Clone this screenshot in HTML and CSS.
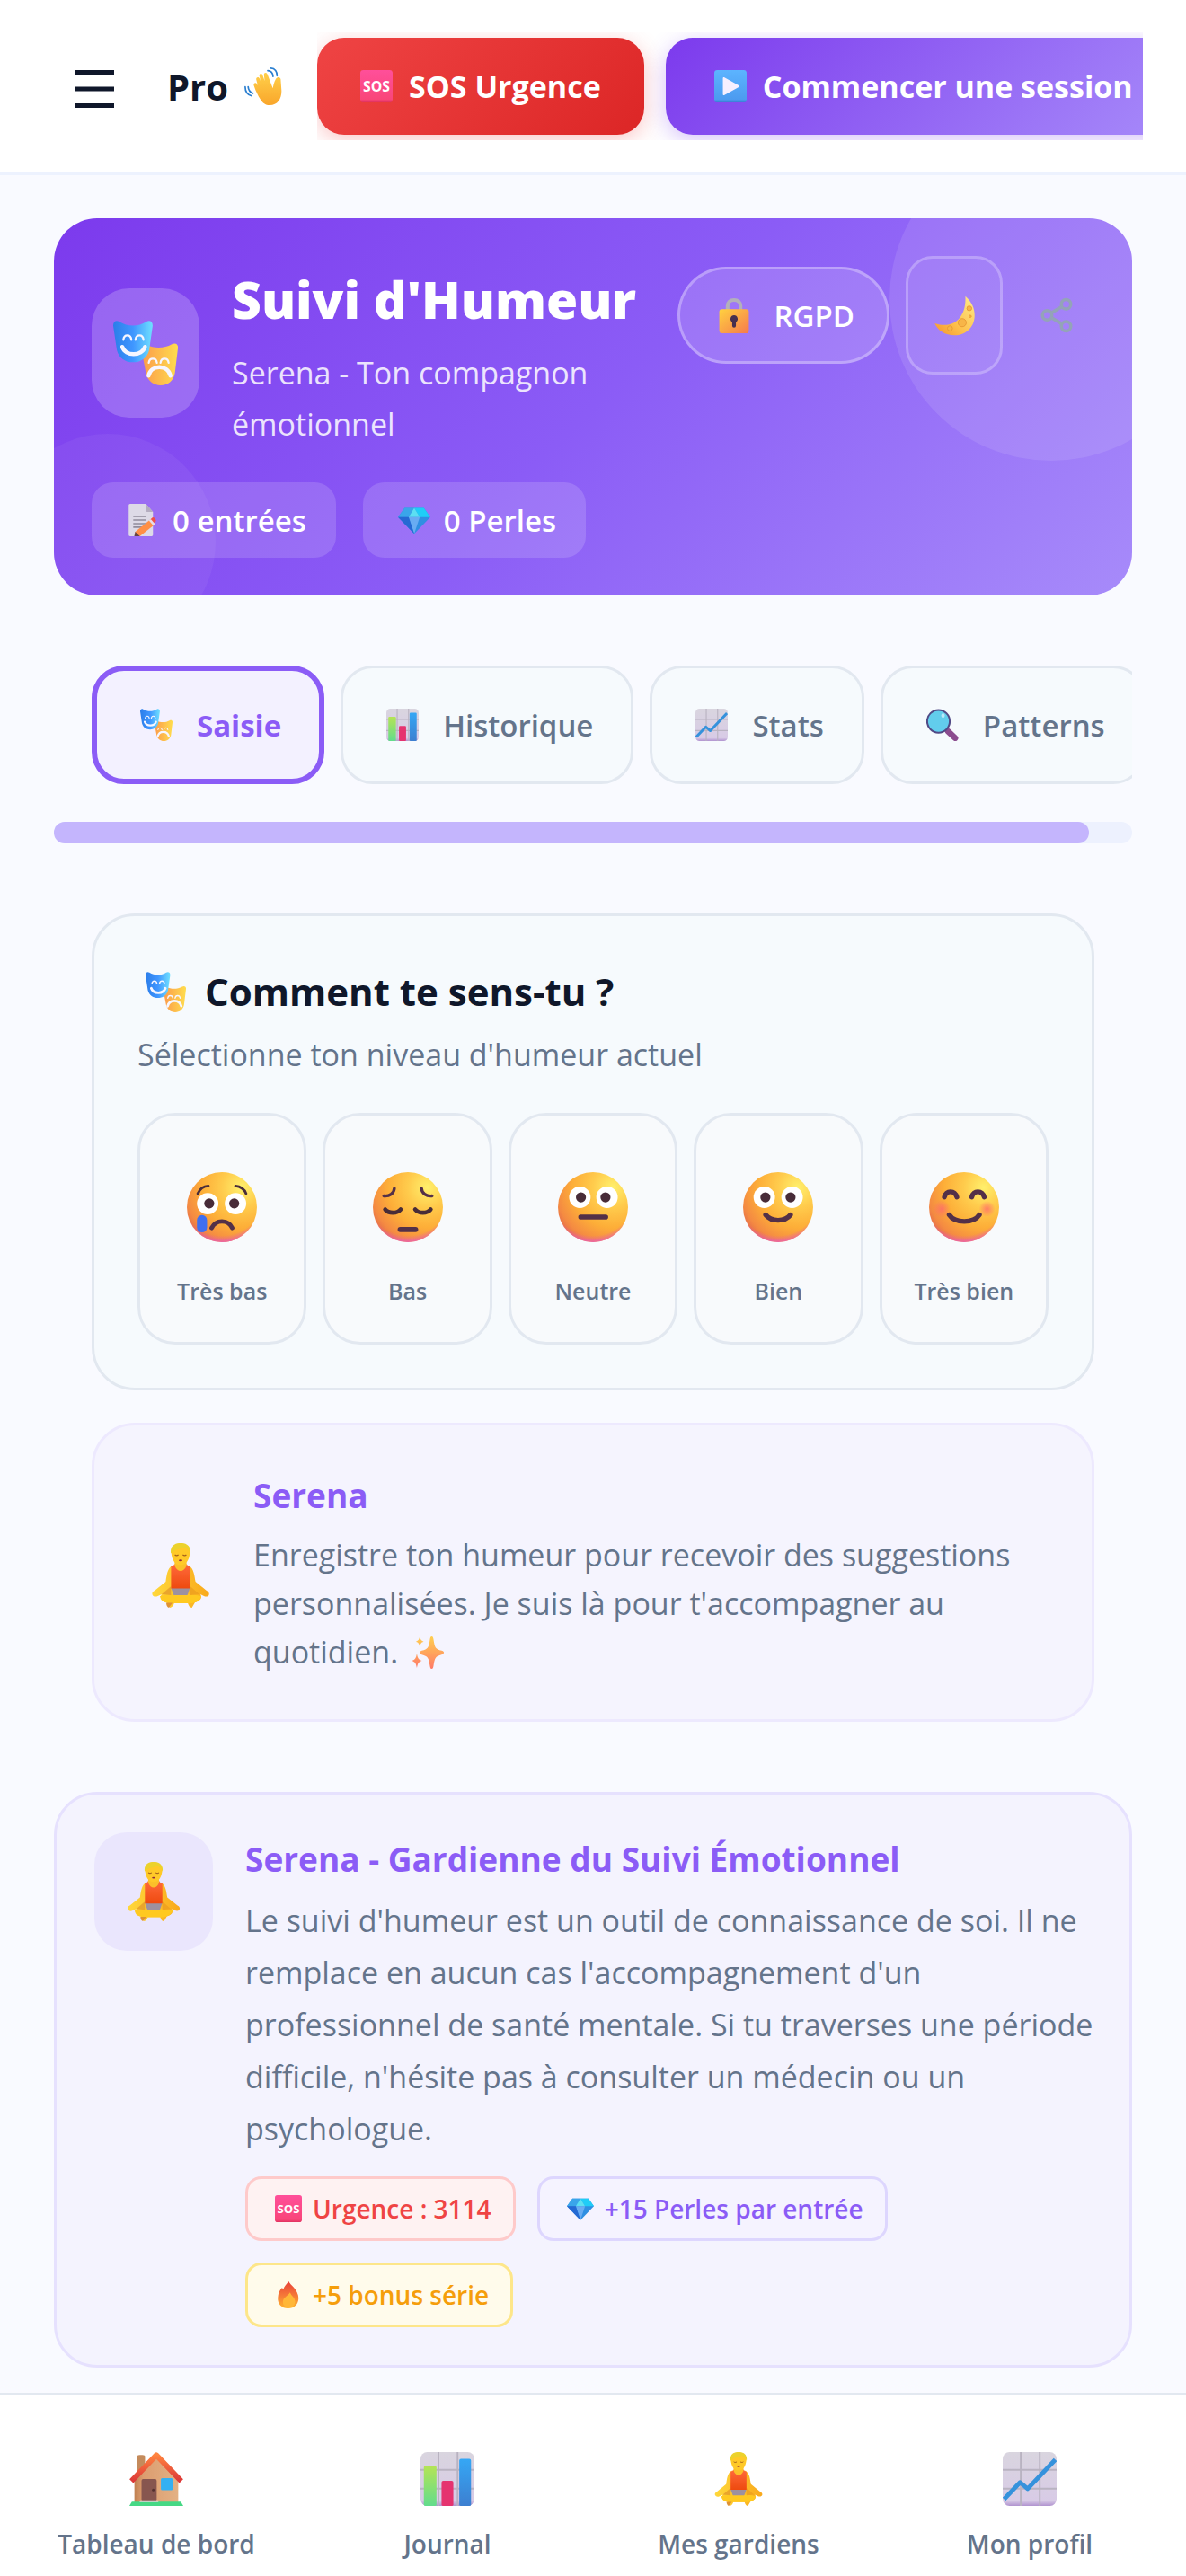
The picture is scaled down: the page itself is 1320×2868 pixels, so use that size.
FILE: index.html
```html
<!DOCTYPE html>
<html lang="fr">

<head>
    <meta charset="utf-8">
    <meta name="viewport" content="width=device-width, initial-scale=1">
    <title>Suivi d'Humeur</title>
    <link rel="stylesheet" href="styles.css">
</head>

<body>
    <!-- icons -->
    <svg class="sprite" width="0" height="0" aria-hidden="true">
        <defs>
            <linearGradient id="gBlue" x1="0" x2="1"><stop offset="0" stop-color="#2b7de9"/><stop offset=".5" stop-color="#3f96ff"/><stop offset="1" stop-color="#6fe0ff"/></linearGradient>
            <linearGradient id="gOrange" x1="0" x2="1"><stop offset="0" stop-color="#fb9a4b"/><stop offset="1" stop-color="#ffdd4d"/></linearGradient>
            <radialGradient id="gFace" cx=".78" cy=".22" r=".95"><stop offset="0" stop-color="#fff06c"/><stop offset=".3" stop-color="#ffcb4c"/><stop offset=".6" stop-color="#fdae38"/><stop offset=".85" stop-color="#f48a42"/><stop offset="1" stop-color="#e0644c"/></radialGradient>
            <radialGradient id="gChin" cx=".5" cy=".3" r=".72"><stop offset=".84" stop-color="#e85ca8" stop-opacity="0"/><stop offset="1" stop-color="#ea5cc0"/></radialGradient>
            <radialGradient id="gCheek"><stop offset="0" stop-color="#ff6b6b" stop-opacity=".8"/><stop offset="1" stop-color="#ff6b6b" stop-opacity="0"/></radialGradient>
            <linearGradient id="gHand" x1="0" y1="0" x2="0" y2="1"><stop offset="0" stop-color="#ffd04a"/><stop offset="1" stop-color="#f9a62b"/></linearGradient>
            <linearGradient id="gPanel" x1="0" y1="0" x2="0" y2="1"><stop offset="0" stop-color="#d9d5df"/><stop offset=".9" stop-color="#d8cbe6"/><stop offset="1" stop-color="#b093cf"/></linearGradient>
            <linearGradient id="gGreen" x1="0" y1="0" x2="0" y2="1"><stop offset="0" stop-color="#b5e455"/><stop offset="1" stop-color="#62dc8c"/></linearGradient>
            <linearGradient id="gBar" x1="0" y1="0" x2="0" y2="1"><stop offset="0" stop-color="#35a7f5"/><stop offset="1" stop-color="#3d7fd0"/></linearGradient>
            <linearGradient id="gTop" x1="0" y1="0" x2="0" y2="1"><stop offset="0" stop-color="#ff6a3c"/><stop offset="1" stop-color="#ee4a0f"/></linearGradient>
            <linearGradient id="gSkin" x1="0" x2="1"><stop offset="0" stop-color="#ffd83b"/><stop offset="1" stop-color="#f9a91c"/></linearGradient>
            <linearGradient id="gPlay" x1="0" y1="0" x2="0" y2="1"><stop offset="0" stop-color="#5cb4ff"/><stop offset=".9" stop-color="#4c9bf0"/><stop offset="1" stop-color="#3b7fd6"/></linearGradient>
            <linearGradient id="gSos" x1="0" y1="0" x2="0" y2="1"><stop offset="0" stop-color="#ff4f9a"/><stop offset=".9" stop-color="#f9467a"/><stop offset="1" stop-color="#e0325f"/></linearGradient>
            <linearGradient id="gFlame" x1="0" y1="0" x2="0" y2="1"><stop offset="0" stop-color="#e84038"/><stop offset=".5" stop-color="#f57638"/><stop offset="1" stop-color="#ffb52e"/></linearGradient>
            <linearGradient id="gWall" x1="0" x2="1"><stop offset="0" stop-color="#c08050"/><stop offset=".2" stop-color="#dc9d70"/><stop offset="1" stop-color="#e3b184"/></linearGradient>
            <linearGradient id="gRoof" x1="0" y1="0" x2="0" y2="1"><stop offset="0" stop-color="#ff8440"/><stop offset="1" stop-color="#dc3838"/></linearGradient>
            <linearGradient id="gSpark" x1="0" y1="0" x2="0" y2="1"><stop offset="0" stop-color="#ffcf50"/><stop offset="1" stop-color="#ff7a68"/></linearGradient>
            <linearGradient id="gMoon" x1="1" y1="0" x2="0" y2="1"><stop offset="0" stop-color="#ffec8c"/><stop offset=".6" stop-color="#fdc04c"/><stop offset="1" stop-color="#f5922e"/></linearGradient>
            <linearGradient id="gLock" x1="0" y1="0" x2="1" y2="1"><stop offset="0" stop-color="#ffd23f"/><stop offset="1" stop-color="#f67a4c"/></linearGradient>
        </defs>

        <symbol id="masks" viewBox="0 0 32 32">
            <path fill="url(#gOrange)" d="M14 14.500c0-2 1-3.800 2.600-2.600 3.400 2 8.600 2 12.400-.2 1.700-1 3.300-.1 3 2L30.500 26c-.7 3.800-3.500 6-7 6s-6.500-2.200-7.300-6z"/>
            <path fill="url(#gBlue)" d="M0 2.600C-.1.500 1.500-.5 3.100.6c3.900 2.500 9.500 2.500 13.200 0 1.700-1.100 3.300-.1 3.200 2l-1.700 11.900c-1 4.100-4.400 6.100-8 6.100s-7-2-8-6.100z"/>
            <g class="cut" fill="none" stroke-linecap="round">
                <path d="M5 9.500c.4-2.900 3.600-2.900 4 0M11 9.500c.4-2.900 3.600-2.900 4 0M17.600 20.800c.4-2.600 3.600-2.600 4 0M23.400 20.800c.4-2.600 3.600-2.600 4 0"/>
                <path d="M4.500 13c1.600 4.800 9.600 4.800 11.200 0M17.500 27.200c1.200-5.600 9.400-5.600 10.800 0" stroke-width="2"/>
            </g>
        </symbol>

        <symbol id="wave" viewBox="0 0 32 32">
            <path fill="url(#gHand)" d="M9.500 19.500 8 15.300c-.6-1.900 1.800-2.900 2.700-1.200l.7 1.300-1.300-5c-.5-2 1.900-2.800 2.700-1l.9 2-1-4.100c-.5-2 2-2.700 2.700-.8l1.800 5-.6-5.300c-.1-2 2.300-2.400 2.900-.4l4.600 11.900c.5-2 .8-5 2.600-8 1.500-2.300 4-1.500 4.100.4L31.500 20c0 7-3.500 12-10 12-4.500 0-7-3-9.500-7.500z"/>
            <path fill="none" stroke="#2b7fd0" stroke-width="1.300" stroke-linecap="round" d="M.7 16.500c0 3.500 2 6.700 5.500 7.700M3.200 16.500c.2 2.500 1.700 4.600 4 5.500M22.500.7c3.500 0 5.300 3 5.200 6.400M19.800 2.800c3 .2 4.300 2.100 4.500 4.900"/>
        </symbol>

        <symbol id="play" viewBox="0 0 32 32">
            <rect width="32" height="32" rx="3" fill="url(#gPlay)"/>
            <path d="M8.500 8.200c0-1 .8-1.400 1.600-.9l14 7.800c.8.500.8 1.300 0 1.800l-14 7.800c-.8.500-1.600.1-1.600-.9z" fill="#f6efff"/>
        </symbol>

        <symbol id="lock" viewBox="0 0 32 38">
            <path d="M9 15V8.500C9 4.600 12 2 16 2s7 2.600 7 6.500V15" fill="none" stroke="#b3b0bb" stroke-width="4"/>
            <rect y="12" width="32" height="26" rx="3" fill="url(#gLock)"/>
            <path d="M16 18.500a4 4 0 0 1 2 7.400V30a2 2 0 0 1-4 0v-4.100a4 4 0 0 1 2-7.400z" fill="#46304f"/>
        </symbol>

        <symbol id="moon" viewBox="0 0 32 32">
            <path d="M24.500.5C29.600 5 32 10.500 31.800 16.500 31.300 25.500 24.500 31.500 16 31.500 8.500 31.500 2.500 27.500.2 22c9.300 3.200 16.300.5 20.300-5C23.700 12.500 24.800 7 24.500.5z" fill="url(#gMoon)"/>
            <g fill="#f7b548" stroke="#e79a35" stroke-width=".7"><circle cx="22" cy="21.500" r="3.200"/><circle cx="12.300" cy="26" r="2"/><circle cx="27.600" cy="10.200" r="1.900"/><circle cx="28.300" cy="16.500" r=".9"/></g>
        </symbol>

        <symbol id="memo" viewBox="0 0 32 32">
            <path d="M2 1.500C2 .7 2.500 0 3.400 0H19l7 8v22.500c0 .9-.6 1.500-1.400 1.500H3.400C2.600 32 2 31.400 2 30.500z" fill="#dcd8e6"/>
            <path d="M19 0l7 8h-5.400C19.600 8 19 7.300 19 6.400z" fill="#b0a9bd"/>
            <path d="M6.500 12.500h13M6.500 16h13M6.500 19.500h13M6.500 23h9" stroke="#8b8597" stroke-width="1.400"/>
            <path d="M8.500 27.500 23.800 15l4.400 5L13 32H8z" fill="#ff8a3c"/>
            <path d="M23 15.700l2.500-2.100c1.300-1 4.300 2.400 3.200 3.700l-2.500 2.100z" fill="#ef4740"/>
            <path d="M22 16.500l1.800-1.500 4.400 5-1.800 1.500z" fill="#e6dbe6"/>
            <path d="M7.500 32l1-4.500L13 32z" fill="#5a3a3c"/>
        </symbol>

        <symbol id="gem" viewBox="0 0 32 32">
            <path d="M6.500 4h19L32 13 16 29.500 0 13z" fill="#2f8fe2"/>
            <path d="M6.500 4H16l-5.500 9H0z" fill="#3aa5ea"/><path d="M16 4h9.500L32 13H21.500z" fill="#1fcdf7"/>
            <path d="M16 4l-5.500 9h11z" fill="#5ce0f2"/><path d="M10.500 13h11L16 29.500z" fill="#69acf2"/><path d="M0 13h10.500L16 29.500z" fill="#2569d3"/>
        </symbol>

        <symbol id="bars" viewBox="0 0 32 32">
            <rect width="32" height="32" rx="4" fill="url(#gPanel)"/>
            <path d="M10.700 0v32M22 0v32M0 10.500h32M0 21.700h32" stroke="#b9b3c1"/>
            <rect x="2" y="8" width="7.500" height="24" rx="1" fill="url(#gGreen)"/>
            <rect x="12.500" y="17" width="7" height="15" rx="1" fill="#e5336f"/>
            <rect x="23" y="4" width="7" height="28" rx="1" fill="url(#gBar)"/>
        </symbol>

        <symbol id="chart" viewBox="0 0 32 32">
            <rect width="32" height="32" rx="4" fill="url(#gPanel)"/>
            <path d="M10.700 0v32M22 0v32M0 10.500h32M0 21.700h32" stroke="#b9b3c1"/>
            <path d="M.8 28l9.500-10 4.500 3.800L31.200 4.500" fill="none" stroke="#3592dc" stroke-width="2.600" stroke-linejoin="round"/>
        </symbol>

        <symbol id="loupe" viewBox="0 0 32 32">
            <path d="M21.500 22.500l7 6.500" stroke="#8b4c8e" stroke-width="6" stroke-linecap="round"/>
            <circle cx="12" cy="12.500" r="11.200" fill="#62cdec" stroke="#514a86" stroke-width="1.800"/>
            <ellipse cx="16.500" cy="6.800" rx="1.800" ry="2.200" fill="#b9e9fa"/>
        </symbol>

        <symbol id="guru" viewBox="0 0 32 36">
            <path d="M11.500 12.500C8.500 14 8.300 18 7.700 21.500L1.500 26.500C.3 27 0 28 .3 28.700c.5 1.300 2 1.300 3 .8l2.200-1c-2 3 1 4.500 3 4.500l1.500 3c1.500-.2 2-1.500 2.500-2.600h7.500c.5 1.500 1 2.600 2.300 2.600L24 33c2-.5 4.500-2 3-4.500l2 1c1.200.5 2.500.3 2.800-.8.200-.9-.2-1.700-1.300-2.200l-6.200-5c-.6-3-.8-7.500-3.800-9z" fill="url(#gSkin)"/>
            <path d="M4.500 29.500c7-1.500 16-1.500 23 0-.5 2.500-3.500 4-6 4H10c-2.500 0-5-1.500-5.500-4z" fill="#ffc920"/>
            <path d="M8 33.300h3.500L9.500 36c-1-.2-1.500-1.500-1.500-2.700z" fill="#df9233"/>
            <path d="M5.500 28.500 10.700 24v5z" fill="#e9a52c"/><path d="M26.500 28.500 21.300 24v5z" fill="#f0a41f"/>
            <path d="M10.700 25h10.500l-1.400 4h-7.600z" fill="#9d919f"/>
            <path d="M10.700 13c1 0 1.700-.8 2-1.500 1.600 4.500 5 4.500 6.600 0 .4.800 1 1.500 2 1.500V25.200H10.700z" fill="url(#gTop)"/>
            <path d="M12.700 10h6.600v2.500c-1.500 4-5.100 4-6.600 0z" fill="#fbc02a"/>
            <path d="M10.800 5.200C10.500 2 13 .3 16 .3s5.500 1.700 5.200 4.900c-.3 3.800-1.900 7-5.200 7s-4.900-3.200-5.200-7z" fill="#ffc928"/>
            <path d="M10.600 5.800C10 2 12.500-.2 16 0c3.500-.2 6 2 5.400 5.800-.7-1.800-1.600-2.800-3.400-3.200-2.500 1-5 .6-7.400 3.200z" fill="#ecd22c"/>
            <path d="M12.800 6.500c.5.500 1.400.5 2 0M17.200 6.500c.6.500 1.500.5 2 0" fill="none" stroke="#a3611c" stroke-width=".6"/>
            <ellipse cx="16" cy="9.600" rx="1" ry=".5" fill="#922b3c"/>
        </symbol>

        <symbol id="sparkles" viewBox="0 0 32 32">
            <path fill="url(#gSpark)" d="M20 0c1 0 1.500 1 1.800 3 1.200 8 2 9.500 8 11 3 .8 3 3 0 3.900-6 1.500-6.800 3-8 11C21.500 31 21 32 20 32s-1.500-1-1.800-3c-1.200-8-2-9.500-8-11.100-3-.9-3-3.100 0-3.900 6-1.500 6.800-3 8-11C18.500 1 19 0 20 0z"/>
            <path fill="url(#gSpark)" d="M8.200 0c.8 3.200 1.200 4 3.800 5-2.600 1-3 1.800-3.800 5-.8-3.200-1.200-4-3.800-5 2.600-1 3-1.800 3.800-5zM5.300 17c1 4.500 1.500 5.700 5 7-3.500 1.300-4 2.500-5 7-1-4.500-1.500-5.700-5-7 3.500-1.300 4-2.500 5-7z"/>
        </symbol>

        <symbol id="flame" viewBox="0 0 32 32">
            <path d="M16.500 0c1 4 11.500 9.500 11.500 20 0 7-5 12-12.500 12S3 27 3.500 19.500C3.700 14 6 10 8.500 7.500l1.300 2C11 6 14 3 16.500 0z" fill="url(#gFlame)"/>
            <path d="M18 13c1 4 6 6 6 11 0 4-3 7-7.500 7S9 28 9.500 23.500C10 19 15 17.500 18 13z" fill="#ffb738"/>
        </symbol>

        <symbol id="house" viewBox="0 0 32 32">
            <path d="M4.500 14V2.500C4.500 1.500 9.300 1.500 9.300 2.500V10z" fill="#c48b5c"/>
            <path d="M3 16 16 3.500 29 16v14H3z" fill="url(#gWall)"/>
            <path d="M1.200 17.300 16 1.800l14.800 15.500" fill="none" stroke="url(#gRoof)" stroke-width="3.200" stroke-linejoin="round"/>
            <path d="M1.500 29.500h29l1.500 2.500H0z" fill="#45d884"/>
            <rect x="7.200" y="16" width="9" height="13" rx="1" fill="#87564f"/>
            <circle cx="14.200" cy="22.500" r=".8" fill="#53302f"/>
            <path d="M6.500 28.700h10.700v1H6z" fill="#ded6dd"/>
            <rect x="18.700" y="15.500" width="7" height="7.200" rx=".8" fill="#34b0f2"/>
        </symbol>
    </svg>

    <header class="topbar">
        <button class="menu-btn" type="button" aria-label="Menu">
            <svg viewBox="0 0 44 48" width="44" height="48" stroke="#0f172a" stroke-width="5"><path d="M0 8.500h44M0 27h44M0 45.500h44"/></svg>
        </button>
        <div class="user-name">Pro <svg class="ico"><use href="#wave"/></svg></div>
        <div class="top-actions">
            <button class="btn btn-sos" type="button">
                <svg class="ico" viewBox="0 0 32 32"><rect width="32" height="32" rx="3" fill="url(#gSos)"/><text class="sos-letters" x="16" y="21" text-anchor="middle">SOS</text></svg>
                SOS Urgence
            </button>
            <button class="btn btn-session" type="button"><svg class="ico"><use href="#play"/></svg>Commencer une session</button>
        </div>
    </header>

    <main>
        <section class="hero">
            <div class="hero-top">
                <div class="hero-icon"><svg class="ico"><use href="#masks"/></svg></div>
                <div class="hero-text">
                    <h1>Suivi d'Humeur</h1>
                    <p>Serena - Ton compagnon émotionnel</p>
                </div>
                <div class="hero-actions">
                    <button class="rgpd" type="button"><svg class="ico"><use href="#lock"/></svg>RGPD</button>
                    <button class="theme-btn" type="button" aria-label="Mode sombre"><svg class="ico"><use href="#moon"/></svg></button>
                    <button class="share-btn" type="button" aria-label="Partager">
                        <svg viewBox="0 0 24 24" width="42" height="42" fill="none" stroke="#94a3b8" stroke-width="2"><circle cx="18" cy="5" r="3"/><circle cx="6" cy="12" r="3"/><circle cx="18" cy="19" r="3"/><path d="M8.600 13.500l6.800 4M15.400 6.500l-6.800 4"/></svg>
                    </button>
                </div>
            </div>
            <div class="hero-stats">
                <span class="stat"><svg class="ico"><use href="#memo"/></svg>0 entrées</span>
                <span class="stat"><svg class="ico"><use href="#gem"/></svg>0 Perles</span>
            </div>
        </section>

        <section class="tabs-wrap">
            <div class="tabs">
                <button class="tab active" type="button"><svg class="ico"><use href="#masks"/></svg>Saisie</button>
                <button class="tab" type="button"><svg class="ico"><use href="#bars"/></svg>Historique</button>
                <button class="tab" type="button"><svg class="ico"><use href="#chart"/></svg>Stats</button>
                <button class="tab" type="button"><svg class="ico"><use href="#loupe"/></svg>Patterns</button>
            </div>
            <div class="scroll-track"><div class="scroll-thumb"></div></div>
        </section>

        <section class="panel">
            <div class="card">
                <h2><svg class="ico"><use href="#masks"/></svg>Comment te sens-tu ?</h2>
                <p class="card-sub">Sélectionne ton niveau d'humeur actuel</p>
                <div class="moods">
                    <button class="mood" type="button">
                        <svg viewBox="0 0 32 32"><circle cx="16" cy="16" r="16" fill="url(#gFace)"/><circle cx="16" cy="16" r="16" fill="url(#gChin)"/>
                            <circle cx="9.500" cy="14.400" r="4.900" fill="#fff"/><circle cx="22.200" cy="14.400" r="4.900" fill="#fff"/><circle cx="10.200" cy="14.300" r="2.300" fill="#482c38"/><circle cx="21.600" cy="14.300" r="2.300" fill="#482c38"/>
                            <path d="M5 9.800c.8-1.900 2.600-3.400 4.800-3.500M22.200 6.300c2.200.1 4.200 1.600 4.800 3.500" fill="none" stroke="#4a2d3a" stroke-width="1.200" stroke-linecap="round"/>
                            <path d="M11.300 25.500c2-4 7.400-4 9.400 0" fill="none" stroke="#533048" stroke-width="2" stroke-linecap="round"/><rect x="4.600" y="19.600" width="4.600" height="7.900" rx="2.300" fill="#3f6ff0"/></svg>
                        <span>Très bas</span>
                    </button>
                    <button class="mood" type="button">
                        <svg viewBox="0 0 32 32"><circle cx="16" cy="16" r="16" fill="url(#gFace)"/><circle cx="16" cy="16" r="16" fill="url(#gChin)"/>
                            <path d="M5 10.900c2.600.3 4.700-1.300 4.800-3.500M27 10.900c-2.600.3-4.700-1.300-4.800-3.500" fill="none" stroke="#533048" stroke-width="1.400" stroke-linecap="round"/>
                            <path d="M5.600 17c1.600 2 5.400 2 7.100 0M19.300 17c1.700 2 5.400 2 7.100 0" fill="none" stroke="#482c38" stroke-width="1.900" stroke-linecap="round"/><path d="M12.500 26.200h7" stroke="#533048" stroke-width="2.400" stroke-linecap="round"/></svg>
                        <span>Bas</span>
                    </button>
                    <button class="mood" type="button">
                        <svg viewBox="0 0 32 32"><circle cx="16" cy="16" r="16" fill="url(#gFace)"/><circle cx="16" cy="16" r="16" fill="url(#gChin)"/>
                            <circle cx="10" cy="11.500" r="4.900" fill="#fff"/><circle cx="22.400" cy="11.500" r="4.900" fill="#fff"/><circle cx="10.500" cy="11.500" r="2.300" fill="#482c38"/><circle cx="21.700" cy="11.500" r="2.300" fill="#482c38"/>
                            <path d="M10.400 20.500h11.400" stroke="#533048" stroke-width="2.300" stroke-linecap="round"/></svg>
                        <span>Neutre</span>
                    </button>
                    <button class="mood" type="button">
                        <svg viewBox="0 0 32 32"><circle cx="16" cy="16" r="16" fill="url(#gFace)"/><circle cx="16" cy="16" r="16" fill="url(#gChin)"/>
                            <circle cx="9.700" cy="11.500" r="4.900" fill="#fff"/><circle cx="22.400" cy="11.500" r="4.900" fill="#fff"/><circle cx="10.200" cy="11.500" r="2.300" fill="#482c38"/><circle cx="21.700" cy="11.500" r="2.300" fill="#482c38"/>
                            <path d="M10.300 19.500c2.600 3.300 8.800 3.300 11.400 0" fill="none" stroke="#533048" stroke-width="2.200" stroke-linecap="round"/></svg>
                        <span>Bien</span>
                    </button>
                    <button class="mood" type="button">
                        <svg viewBox="0 0 32 32"><circle cx="16" cy="16" r="16" fill="url(#gFace)"/><circle cx="16" cy="16" r="16" fill="url(#gChin)"/>
                            <circle cx="5.800" cy="16.800" r="4" fill="url(#gCheek)"/><circle cx="26.500" cy="16.800" r="3.700" fill="url(#gCheek)"/>
                            <path d="M7 11.400c.9-3.200 4.700-3.200 5.700 0M19.500 11.400c.9-3.200 4.700-3.200 5.700 0" fill="none" stroke="#533048" stroke-width="2.200" stroke-linecap="round"/><path d="M9.200 19.500c2.600 4 11.200 4 13.800 0" fill="none" stroke="#533048" stroke-width="2.200" stroke-linecap="round"/></svg>
                        <span>Très bien</span>
                    </button>
                </div>
            </div>

            <div class="tip">
                <div class="tip-icon"><svg class="ico"><use href="#guru"/></svg></div>
                <div>
                    <h3>Serena</h3>
                    <p>Enregistre ton humeur pour recevoir des suggestions personnalisées. Je suis là pour t'accompagner au quotidien. <svg class="ico spark"><use href="#sparkles"/></svg></p>
                </div>
            </div>
        </section>

        <section class="guardian">
            <div class="guardian-icon"><svg class="ico"><use href="#guru"/></svg></div>
            <div class="guardian-body">
                <h3>Serena - Gardienne du Suivi Émotionnel</h3>
                <p>Le suivi d'humeur est un outil de connaissance de soi. Il ne remplace en aucun cas l'accompagnement d'un professionnel de santé mentale. Si tu traverses une période difficile, n'hésite pas à consulter un médecin ou un psychologue.</p>
                <div class="badges">
                    <a class="badge red" href="tel:3114">
                        <svg class="ico" viewBox="0 0 32 32"><rect width="32" height="32" rx="3" fill="url(#gSos)"/><text class="sos-letters" x="16" y="21" text-anchor="middle">SOS</text></svg>
                        Urgence : 3114
                    </a>
                    <span class="badge violet"><svg class="ico"><use href="#gem"/></svg>+15 Perles par entrée</span>
                    <span class="badge yellow"><svg class="ico"><use href="#flame"/></svg>+5 bonus série</span>
                </div>
            </div>
        </section>
    </main>

    <nav class="bottom-nav">
        <a href="#"><svg class="ico"><use href="#house"/></svg>Tableau de bord</a>
        <a href="#"><svg class="ico"><use href="#bars"/></svg>Journal</a>
        <a href="#"><svg class="ico"><use href="#guru"/></svg>Mes gardiens</a>
        <a href="#"><svg class="ico"><use href="#chart"/></svg>Mon profil</a>
    </nav>
</body>

</html>
```
FILE: styles.css
```css
* {
    box-sizing: border-box;
}

body {
    margin: 0;
    min-height: 100vh;
    display: flex;
    flex-direction: column;
    background: #f9faff;
    color: #0f172a;
    font-family: "Segoe UI", "Open Sans", "Noto Sans", sans-serif;
    font-size: 34px;
}

h1,
h2,
h3,
p {
    margin: 0;
}

button {
    border: none;
    background: none;
    padding: 0;
    margin: 0;
    font: inherit;
    color: inherit;
    white-space: nowrap;
}

a {
    color: inherit;
    text-decoration: none;
}

.sprite {
    position: absolute;
}

.ico {
    width: 36px;
    height: 36px;
    flex-shrink: 0;
}

.cut {
    stroke: #f6f6ff;
}

.sos-letters {
    font: 700 14px "Open Sans", sans-serif;
    fill: #fff;
}

/* top bar */
.topbar {
    display: flex;
    align-items: center;
    gap: 36px;
    padding: 36px 48px 36px 60px;
    background: #fff;
    border-bottom: 3px solid #edf2fe;
}

.menu-btn {
    flex-shrink: 0;
    width: 90px;
    height: 90px;
    display: flex;
    align-items: center;
    justify-content: center;
}

.user-name {
    display: flex;
    align-items: center;
    flex-shrink: 0;
    gap: 18px;
    padding-right: 3px;
    font-size: 40px;
    font-weight: 700;
}

.user-name .ico {
    width: 42px;
    height: 42px;
}

.top-actions {
    flex: 1;
    min-width: 0;
    display: flex;
    gap: 24px;
    padding: 6px 0;
    overflow: hidden;
}

.btn {
    flex-shrink: 0;
    display: flex;
    align-items: center;
    gap: 18px;
    height: 108px;
    padding: 0 48px;
    border-radius: 30px;
    color: #fff;
    font-weight: 700;
}

.btn-sos {
    background: linear-gradient(135deg, #ef4444, #dc2626);
    box-shadow: 0 6px 24px rgba(239, 68, 68, 0.3);
}

.btn-session {
    padding: 0 54px;
    background: linear-gradient(135deg, #7c3aed, #a78bfa);
    box-shadow: 0 6px 24px rgba(124, 58, 237, 0.3);
}

main {
    display: flex;
    flex-direction: column;
    gap: 36px;
    padding: 48px 60px 27px;
}

/* hero */
.hero {
    position: relative;
    overflow: hidden;
    padding: 42px;
    border-radius: 48px;
    background: linear-gradient(135deg, #7c3aed 0%, #8b5cf6 50%, #a78bfa 100%);
    color: #fff;
}

.hero:before,
.hero:after {
    content: "";
    position: absolute;
    border-radius: 50%;
}

.hero:before {
    top: -90px;
    right: -90px;
    width: 360px;
    height: 360px;
    background: rgba(255, 255, 255, 0.1);
}

.hero:after {
    bottom: -60px;
    left: -60px;
    width: 240px;
    height: 240px;
    background: rgba(255, 255, 255, 0.05);
}

.hero-top {
    position: relative;
    display: flex;
    align-items: center;
    gap: 36px;
}

.hero-icon {
    flex-shrink: 0;
    width: 120px;
    height: 144px;
    display: flex;
    align-items: center;
    justify-content: center;
    border-radius: 42px;
    background: rgba(255, 255, 255, 0.2);
}

.hero-icon .ico {
    width: 72px;
    height: 72px;
}

.hero-icon .cut {
    stroke: #9565f2;
}

.hero-text {
    flex: 1;
    min-width: 0;
}

.hero h1 {
    margin-bottom: 6px;
    font-size: 57px;
    font-weight: 800;
    line-height: 96px;
    white-space: nowrap;
}

.hero-text p {
    line-height: 57px;
    color: rgba(255, 255, 255, 0.85);
}

.hero-actions {
    align-self: flex-start;
    display: flex;
    align-items: center;
    gap: 18px;
}

.rgpd {
    display: flex;
    align-items: center;
    gap: 27px;
    height: 108px;
    padding: 0 36px 0 42px;
    border: 3px solid rgba(255, 255, 255, 0.3);
    border-radius: 54px;
    background: rgba(255, 255, 255, 0.15);
    font-size: 33px;
    font-weight: 600;
}

.rgpd .ico {
    height: 39px;
}

.theme-btn {
    display: flex;
    align-items: center;
    justify-content: center;
    width: 108px;
    height: 132px;
    border: 3px solid rgba(255, 255, 255, 0.25);
    border-radius: 30px;
    background: rgba(255, 255, 255, 0.05);
}

.theme-btn .ico {
    width: 45px;
    height: 45px;
}

.share-btn {
    width: 84px;
    height: 84px;
    display: flex;
    align-items: center;
    justify-content: center;
}

.hero-stats {
    position: relative;
    display: flex;
    gap: 30px;
    margin-top: 36px;
}

.stat {
    display: flex;
    align-items: center;
    gap: 15px;
    height: 84px;
    padding: 0 33px 0 39px;
    border-radius: 24px;
    background: rgba(255, 255, 255, 0.15);
    font-size: 33px;
    font-weight: 600;
}

/* tabs */
.tabs {
    display: flex;
    gap: 18px;
    padding: 42px;
    overflow: hidden;
}

.tab {
    flex-shrink: 0;
    display: flex;
    align-items: center;
    gap: 27px;
    height: 132px;
    padding: 0 42px 0 48px;
    border: 3px solid #e2e8f0;
    border-radius: 36px;
    background: #f6fafd;
    color: #64748b;
    font-size: 33px;
    font-weight: 600;
}

.tab.active {
    padding: 0 42px 0 48px;
    border: 6px solid #8b5cf6;
    background: #f3f1ff;
    color: #8b5cf6;
    font-weight: 700;
}

.scroll-track {
    height: 24px;
    border-radius: 12px;
    background: #edf1fe;
}

.scroll-thumb {
    width: 96%;
    height: 100%;
    border-radius: 12px;
    background: #c4b5fd;
}

/* mood entry */
.panel {
    display: flex;
    flex-direction: column;
    gap: 36px;
    padding: 42px;
}

.card {
    padding: 48px;
    border: 3px solid #e2e8f0;
    border-radius: 48px;
    background: #f6fafd;
}

.card h2 {
    display: flex;
    align-items: center;
    gap: 21px;
    padding-left: 9px;
    font-size: 42px;
    font-weight: 700;
    line-height: 72px;
}

.card h2 .ico {
    width: 45px;
    height: 45px;
}

.card-sub {
    margin: 6px 0 36px;
    line-height: 57px;
    color: #64748b;
}

.moods {
    display: grid;
    grid-template-columns: repeat(5, 1fr);
    gap: 18px;
}

.mood {
    display: flex;
    flex-direction: column;
    align-items: center;
    padding: 63px 0 36px;
    border: 3px solid #e2e8f0;
    border-radius: 42px;
    background: #f8fafc;
    color: #64748b;
    font-size: 25px;
    font-weight: 600;
    line-height: 42px;
}

.mood svg {
    width: 78px;
    height: 78px;
    margin-bottom: 33px;
}

.tip {
    display: flex;
    align-items: center;
    gap: 33px;
    padding: 48px;
    border: 3px solid #ede9fe;
    border-radius: 48px;
    background: #f5f4fe;
    color: #64748b;
}

.tip-icon {
    flex-shrink: 0;
    width: 96px;
    display: flex;
    justify-content: center;
    padding-top: 6px;
}

.tip-icon .ico {
    width: 66px;
    height: 72px;
}

.tip h3,
.guardian h3 {
    margin-bottom: 9px;
    font-size: 37px;
    font-weight: 700;
    line-height: 60px;
    color: #8b5cf6;
}

.tip p {
    line-height: 54px;
}

.spark {
    margin-left: 6px;
    vertical-align: -6px;
}

/* guardian */
.guardian {
    display: flex;
    align-items: flex-start;
    gap: 36px;
    padding: 42px 30px 42px 42px;
    border: 3px solid #e6e1fe;
    border-radius: 48px;
    background: #f4f3fe;
}

.guardian-icon {
    flex-shrink: 0;
    width: 132px;
    height: 132px;
    display: flex;
    align-items: center;
    justify-content: center;
    border-radius: 36px;
    background: #eae6fd;
}

.guardian-icon .ico {
    width: 60px;
    height: 66px;
}

.guardian-body {
    flex: 1;
    min-width: 0;
}

.guardian p {
    line-height: 58px;
    color: #64748b;
}

.badges {
    display: flex;
    flex-wrap: wrap;
    gap: 24px;
    margin-top: 24px;
}

.badge {
    display: flex;
    align-items: center;
    gap: 12px;
    height: 72px;
    padding: 0 24px 0 30px;
    border: 3px solid;
    border-radius: 18px;
    font-size: 28px;
    font-weight: 600;
}

.badge .ico {
    width: 30px;
    height: 30px;
}

.badge.red {
    border-color: #fecaca;
    background: #fef2f2;
    color: #ef4444;
}

.badge.violet {
    border-color: #ddd6fe;
    background: #f5f3ff;
    color: #8b5cf6;
}

.badge.yellow {
    border-color: #fde68a;
    background: #fffbeb;
    color: #f59e0b;
}

/* bottom nav */
.bottom-nav {
    position: sticky;
    bottom: 0;
    display: grid;
    grid-template-columns: repeat(4, 1fr);
    margin-top: auto;
    padding: 63px 12px 15px;
    border-top: 3px solid #e2e8f0;
    background: #fff;
    color: #64748b;
    font-size: 28px;
    font-weight: 600;
    line-height: 42px;
}

.bottom-nav a {
    display: flex;
    flex-direction: column;
    align-items: center;
    gap: 21px;
}

.bottom-nav .ico {
    width: 60px;
    height: 60px;
}
```
